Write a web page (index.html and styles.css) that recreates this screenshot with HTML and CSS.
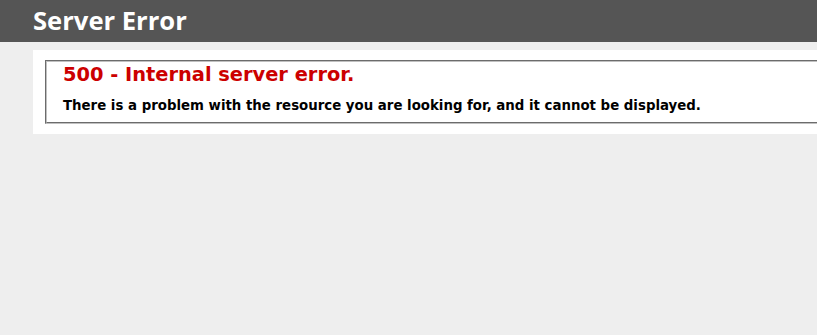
FILE: index.html
```html
<!DOCTYPE html>
<html>
<head>
<meta charset="utf-8">
<title>500 - Internal server error.</title>
<link rel="stylesheet" href="styles.css">
</head>
<body>
<div class="header"><h1 class="title">Server Error</h1></div>
<div class="content">
  <div class="content-container">
    <fieldset class="box">
      <h2 class="error-title">500 - Internal server error.</h2>
      <h3 class="error-text">There is a problem with the resource you are looking for, and it cannot be displayed.</h3>
    </fieldset>
  </div>
</div>
</body>
</html>
```
FILE: styles.css
```css
html, body {
  margin: 0;
  padding: 0;
}
body {
  font-size: 11.2px;
  font-family: "DejaVu Sans", Verdana, sans-serif;
  background: #eeeeee;
  overflow: hidden;
}
.header {
  padding: 6px 0 6px 33px;
  background-color: #555555;
  color: #ffffff;
}
.title {
  margin: 0;
  font-family: "Open Sans", "DejaVu Sans", sans-serif;
  font-size: 25.6px;
  font-weight: bold;
  line-height: 30px;
  color: #ffffff;
}
.content {
  margin: 0 0 0 33px;
}
.content-container {
  background: #ffffff;
  margin-top: 8px;
  padding: 10px 0 10px 10px;
}
.box {
  margin: 0 0 0 2px;
  padding: 0 15px 8px 16px;
  border: 2px groove #c0c0c0;
  border-right: none;
}
.error-title {
  margin: 0;
  font-size: 19.4px;
  line-height: 25px;
  color: #cc0000;
}
.error-text {
  margin: 11px 0 0 0;
  font-size: 13.34px;
  line-height: 16px;
  color: #000000;
}
```
